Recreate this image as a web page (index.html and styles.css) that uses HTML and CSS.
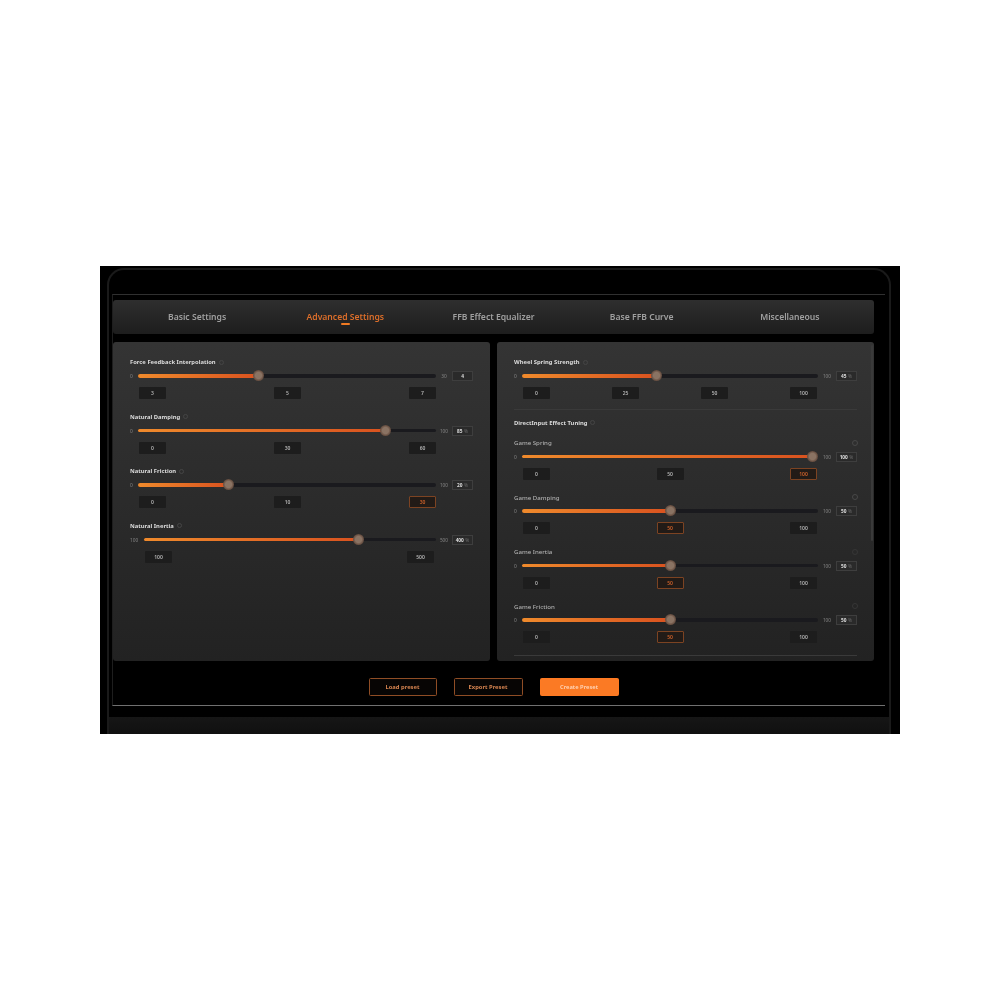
FILE: index.html
```html
<!DOCTYPE html>
<html lang="en">
<head>
<meta charset="utf-8">
<title>Advanced Settings</title>
<link rel="stylesheet" href="styles.css">
</head>
<body>
<main class="stage">
  <div class="frame">
    <div class="inner">
      <nav class="tabs">
        <span class="tab">Basic Settings</span>
        <span class="tab active">Advanced Settings</span>
        <span class="tab">FFB Effect Equalizer</span>
        <span class="tab">Base FFB Curve</span>
        <span class="tab">Miscellaneous</span>
      </nav>
      <div class="panels">
        <section class="panel left">
          <div class="setting">
            <div class="label"><span>Force Feedback Interpolation</span><i class="info"></i></div>
            <div class="slider"><span class="end">0</span><div class="track"><div class="fill" style="width:40.6%"><b class="thumb"></b></div></div><span class="max">30</span><span class="input">4</span></div>
            <div class="presets"><span>3</span><span>5</span><span>7</span></div>
          </div>
          <div class="setting">
            <div class="label"><span>Natural Damping</span><i class="info"></i></div>
            <div class="slider"><span class="end">0</span><div class="track"><div class="fill" style="width:83.2%"><b class="thumb"></b></div></div><span class="max">100</span><span class="input">85 <em>%</em></span></div>
            <div class="presets"><span>0</span><span>30</span><span>60</span></div>
          </div>
          <div class="setting">
            <div class="label"><span>Natural Friction</span><i class="info"></i></div>
            <div class="slider"><span class="end">0</span><div class="track"><div class="fill" style="width:30.5%"><b class="thumb"></b></div></div><span class="max">100</span><span class="input">20 <em>%</em></span></div>
            <div class="presets"><span>0</span><span>10</span><span class="on">30</span></div>
          </div>
          <div class="setting wide">
            <div class="label"><span>Natural Inertia</span><i class="info"></i></div>
            <div class="slider"><span class="end">100</span><div class="track"><div class="fill" style="width:73.6%"><b class="thumb"></b></div></div><span class="max">500</span><span class="input">400 <em>%</em></span></div>
            <div class="presets"><span>100</span><span>500</span></div>
          </div>
        </section>
        <section class="panel right">
          <div class="scrollbar"></div>
          <div class="setting">
            <div class="label"><span>Wheel Spring Strength</span><i class="info"></i></div>
            <div class="slider"><span class="end">0</span><div class="track"><div class="fill" style="width:45.3%"><b class="thumb"></b></div></div><span class="max">100</span><span class="input">45 <em>%</em></span></div>
            <div class="presets"><span>0</span><span>25</span><span>50</span><span>100</span></div>
          </div>
          <hr class="rule">
          <div class="section-title"><span>DirectInput Effect Tuning</span><i class="info"></i></div>
          <div class="setting game">
            <div class="label"><span>Game Spring</span><i class="reset"></i></div>
            <div class="slider"><span class="end">0</span><div class="track"><div class="fill" style="width:98%"><b class="thumb"></b></div></div><span class="max">100</span><span class="input">100 <em>%</em></span></div>
            <div class="presets"><span>0</span><span>50</span><span class="on">100</span></div>
          </div>
          <div class="setting game">
            <div class="label"><span>Game Damping</span><i class="reset"></i></div>
            <div class="slider"><span class="end">0</span><div class="track"><div class="fill" style="width:50%"><b class="thumb"></b></div></div><span class="max">100</span><span class="input">50 <em>%</em></span></div>
            <div class="presets"><span>0</span><span class="on">50</span><span>100</span></div>
          </div>
          <div class="setting game">
            <div class="label"><span>Game Inertia</span><i class="reset faint"></i></div>
            <div class="slider"><span class="end">0</span><div class="track"><div class="fill" style="width:50%"><b class="thumb"></b></div></div><span class="max">100</span><span class="input">50 <em>%</em></span></div>
            <div class="presets"><span>0</span><span class="on">50</span><span>100</span></div>
          </div>
          <div class="setting game">
            <div class="label"><span>Game Friction</span><i class="reset faint"></i></div>
            <div class="slider"><span class="end">0</span><div class="track"><div class="fill" style="width:50%"><b class="thumb"></b></div></div><span class="max">100</span><span class="input">50 <em>%</em></span></div>
            <div class="presets"><span>0</span><span class="on">50</span><span>100</span></div>
          </div>
          <hr class="rule end-rule">
        </section>
      </div>
      <div class="actions">
        <button class="btn load">Load preset</button>
        <button class="btn export">Export Preset</button>
        <button class="btn create">Create Preset</button>
      </div>
    </div>
    <div class="strip"></div>
  </div>
</main>
</body>
</html>
```

FILE: styles.css
```css
* { box-sizing: border-box; }
html, body { margin: 0; background: #fff; }
body { height: 1000px; padding-top: 266px; font-family: "Noto Sans", "Open Sans", sans-serif; }

.stage { width: 800px; height: 468px; margin-left: 100px; padding: 2px 9px 0 7px; background: #000; overflow: hidden; filter: blur(0.6px); }
.frame { height: 466px; border: 2px solid #1a1a1a; border-bottom: 0; border-radius: 17px 17px 0 0; display: flex; flex-direction: column; overflow: hidden; }
.inner { margin: 24px 4px 11px 3px; padding: 5px 11px 9px 0; border-top: 1px solid #303030; border-bottom: 1px solid #707070; border-left: 1px solid #1e1e1e; }
.strip { flex: 1; background: linear-gradient(#161616, #101010); }

.tabs { height: 34px; padding: 0 10px 1px; display: grid; grid-template-columns: repeat(5, 1fr); align-items: center; text-align: center; border-radius: 3px; background: linear-gradient(#2e2e2e, #1d1d1d); }
.tab { position: relative; font-size: 8.6px; font-weight: 600; color: #a0a0a0; }
.tab.active { color: #dc6e2a; }
.tab.active::after { content: ""; position: absolute; left: 50%; bottom: -2px; width: 9px; height: 2px; margin-left: -4.5px; border-radius: 1px; background: #f07a22; }

.panels { margin-top: 8px; display: grid; grid-template-columns: 1fr 1fr; gap: 7px; }
.panel { position: relative; height: 319px; padding: 15px 17px 0; border-radius: 3px; display: flex; flex-direction: column; gap: 12.5px; background: linear-gradient(#343434, #222); overflow: hidden; }
.scrollbar { position: absolute; top: 3px; right: 1px; width: 2px; height: 196px; border-radius: 1px; background: #3a3a3a; }

.setting { display: flex; flex-direction: column; }
.label, .section-title { height: 10px; display: flex; align-items: center; gap: 3px; font-size: 5.85px; font-weight: 700; color: #dcdcdc; white-space: nowrap; }
.section-title { margin-top: -2.5px; margin-bottom: -2.5px; }
.game .label { justify-content: space-between; font-size: 6.1px; font-weight: 500; color: #b0b0b0; }
.info { width: 5px; height: 5px; border: 0.6px solid #454545; border-radius: 50%; }
.reset { width: 6px; height: 6px; margin-right: -1px; border: 0.8px solid #484848; border-radius: 50%; }
.reset.faint { border-color: #363636; }

.slider { margin-top: 4px; height: 10px; display: grid; grid-template-columns: 8px 1fr 16px 21px; align-items: center; font-size: 4.8px; color: #858585; }
.right .slider { grid-template-columns: 8px 1fr 18px 21px; }
.wide .slider { grid-template-columns: 14px 1fr 16px 21px; }
.max { text-align: center; }
.track { height: 3.5px; border-radius: 2px; background: #1a1a1e; }
.fill { position: relative; height: 100%; border-radius: 2px; background: linear-gradient(90deg, #ef8a2c, #d9521f); }
.thumb { position: absolute; top: -4px; right: -5.5px; width: 11px; height: 11px; border-radius: 50%; background: radial-gradient(circle, #8a7363 0 40%, #6b5244 62%, rgba(100,72,55,.35) 100%); }
.input { height: 10px; display: flex; align-items: center; justify-content: center; gap: 1.5px; border: 1px solid #3e3e3e; background: #2a2a2a; font-weight: 700; color: #dedede; }
.input em { font-style: normal; font-weight: 400; color: #6c6c6c; }

.presets { margin: 6px 37px 0 9px; display: flex; justify-content: space-between; }
.right .presets { margin-right: 40px; }
.wide .presets { margin-left: 15px; margin-right: 39px; }
.presets span { width: 27px; height: 12px; display: flex; align-items: center; justify-content: center; border-radius: 1px; background: #1d1d1d; font-size: 5px; font-weight: 600; color: #b5b5b5; }
.presets .on { border: 1px solid #7c4322; background: #221b17; color: #d0622a; }

.rule { margin: -2.5px 0; height: 0; border: 0; border-top: 1px solid #3a3a3a; }
.end-rule { margin-top: -1px; }

.actions { margin-top: 17px; height: 18px; display: flex; justify-content: center; gap: 17px; }
.btn { height: 18px; padding: 0; border: 1px solid #8f4d25; border-radius: 1.5px; background: #070504; font-family: inherit; font-size: 5.8px; font-weight: 700; color: #d68450; }
.load { width: 68px; }
.export { width: 69px; }
.create { width: 79px; border-color: #ff7a22; background: #fb7a24; font-weight: 600; color: #ffd9bf; }
```
